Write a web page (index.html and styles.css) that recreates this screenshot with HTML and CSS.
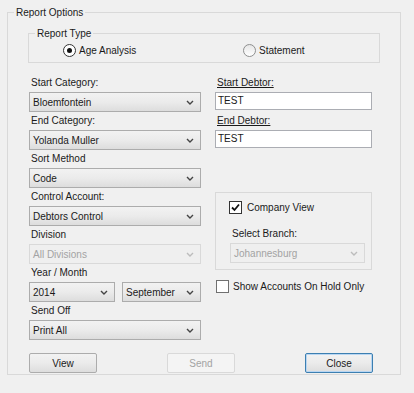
FILE: index.html
```html
<!DOCTYPE html>
<html lang="en">
<head>
    <title>Report Options</title>
    <link rel="stylesheet" href="styles.css">
</head>
<body>
    <fieldset class="group outer">
        <legend>Report Options</legend>
        <div class="outer-body">

            <!-- Report Type -->
            <fieldset class="group report-type">
                <legend>Report Type</legend>
                <div class="radio-row">
                    <label class="radio-opt"><span class="radio checked"></span>Age Analysis</label>
                    <label class="radio-opt"><span class="radio"></span>Statement</label>
                </div>
            </fieldset>

            <div class="columns">
                <div class="col-left">
                    <div class="field-label">Start Category:</div>
                    <div class="combo">Bloemfontein<svg class="chev" viewBox="0 0 8 5"><polyline points="1,1 4,4 7,1"/></svg></div>
                    <div class="field-label">End Category:</div>
                    <div class="combo">Yolanda Muller<svg class="chev" viewBox="0 0 8 5"><polyline points="1,1 4,4 7,1"/></svg></div>
                    <div class="field-label">Sort Method</div>
                    <div class="combo">Code<svg class="chev" viewBox="0 0 8 5"><polyline points="1,1 4,4 7,1"/></svg></div>
                    <div class="field-label">Control Account:</div>
                    <div class="combo">Debtors Control<svg class="chev" viewBox="0 0 8 5"><polyline points="1,1 4,4 7,1"/></svg></div>
                    <div class="field-label">Division</div>
                    <div class="combo disabled">All Divisions<svg class="chev" viewBox="0 0 8 5"><polyline points="1,1 4,4 7,1"/></svg></div>
                    <div class="field-label">Year / Month</div>
                    <div class="combo-pair">
                        <div class="combo year">2014<svg class="chev" viewBox="0 0 8 5"><polyline points="1,1 4,4 7,1"/></svg></div>
                        <div class="combo month">September<svg class="chev" viewBox="0 0 8 5"><polyline points="1,1 4,4 7,1"/></svg></div>
                    </div>
                    <div class="field-label">Send Off</div>
                    <div class="combo">Print All<svg class="chev" viewBox="0 0 8 5"><polyline points="1,1 4,4 7,1"/></svg></div>
                </div>

                <div class="col-right">
                    <div class="field-label"><u>Start Debtor:</u></div>
                    <div class="textbox">TEST</div>
                    <div class="field-label"><u>End Debtor:</u></div>
                    <div class="textbox">TEST</div>

                    <div class="group company">
                        <label class="check-row">
                            <span class="check checked"><svg viewBox="0 0 11 11"><polyline points="2,5.5 4.5,8 9,2.5"/></svg></span>Company View
                        </label>
                        <div class="field-label branch-label">Select Branch:</div>
                        <div class="combo disabled">Johannesburg<svg class="chev" viewBox="0 0 8 5"><polyline points="1,1 4,4 7,1"/></svg></div>
                    </div>

                    <label class="check-row hold">
                        <span class="check"></span>Show Accounts On Hold Only
                    </label>
                </div>
            </div>

            <div class="buttons">
                <button class="btn">View</button>
                <button class="btn" disabled>Send</button>
                <button class="btn focused">Close</button>
            </div>
        </div>
    </fieldset>
</body>
</html>
```

FILE: styles.css
```css
body {
    margin: 0;
    padding: 6px 0 0 7px;
    background: #f0f0f0;
    font-family: "Liberation Sans", Arial, sans-serif;
    font-size: 10px;
    color: #1a1a1a;
}
.group {
    margin: 0;
    padding: 0;
    border: 1px solid #d9d9d9;
    box-sizing: border-box;
}
.group legend {
    margin-left: 6px;
    padding: 0 2px;
    line-height: 13px;
}
.outer {
    width: 394px;
    height: 369px;
}
.outer-body {
    padding: 8px 0 0 20px;
}
.report-type {
    width: 352px;
}
.radio-row {
    display: flex;
    align-items: center;
    margin: 4px 0 5px 34px;
    height: 13px;
}
.radio-opt {
    display: flex;
    align-items: center;
    gap: 3px;
}
.radio-opt:first-child {
    width: 180px;
}
.radio {
    width: 11px;
    height: 11px;
    border: 1px solid #8e8f8f;
    border-radius: 50%;
    background: linear-gradient(#e6e6e6, #ffffff);
    position: relative;
}
.radio.checked {
    border-color: #333;
    background: #fff;
}
.radio.checked::after {
    content: "";
    position: absolute;
    left: 3px;
    top: 3px;
    width: 5px;
    height: 5px;
    border-radius: 50%;
    background: #111;
}
.columns {
    display: flex;
    gap: 14px;
    margin: 13px 0 0 1px;
}
.col-left {
    width: 172px;
}
.col-right {
    width: 157px;
}
.field-label {
    height: 14px;
    line-height: 14px;
    margin-bottom: 2px;
    padding-left: 2px;
}
.combo {
    height: 20px;
    box-sizing: border-box;
    border: 1px solid #acacac;
    background: linear-gradient(#f2f2f2, #ebebeb 50%, #dddddd);
    display: flex;
    align-items: center;
    justify-content: space-between;
    padding: 0 6px 0 3px;
    margin-bottom: 2px;
}
.chev {
    width: 8px;
    height: 5px;
    fill: none;
    stroke: #444;
    stroke-width: 1.4;
}
.combo.disabled {
    border-color: #d9d9d9;
    background: #efefef;
    color: #a3a3a3;
}
.combo.disabled .chev {
    stroke: #bcbcbc;
}
.combo-pair {
    display: flex;
    gap: 7px;
}
.combo.year {
    width: 86px;
}
.combo.month {
    width: 79px;
}
.textbox {
    height: 18px;
    line-height: 16px;
    box-sizing: border-box;
    border: 1px solid #abadb3;
    background: #fff;
    padding-left: 2px;
    margin-bottom: 4px;
}
.company {
    margin-top: 44px;
    height: 78px;
    padding: 8px 6px 0 14px;
}
.check-row {
    display: flex;
    align-items: center;
    gap: 5px;
    height: 13px;
}
.company .check-row {
    margin-left: -1px;
}
.check {
    width: 11px;
    height: 11px;
    border: 1px solid #707070;
    background: #fff;
    display: flex;
    align-items: center;
    justify-content: center;
}
.check.checked {
    border-color: #333;
}
.check svg {
    width: 11px;
    height: 11px;
    fill: none;
    stroke: #111;
    stroke-width: 1.8;
}
.branch-label {
    margin-top: 13px;
}
.hold {
    margin: 10px 0 0 1px;
    gap: 4px;
}
.buttons {
    display: flex;
    justify-content: space-between;
    width: 344px;
    margin: 11px 0 0 1px;
}
.btn {
    width: 68px;
    height: 20px;
    border: 1px solid #acacac;
    border-radius: 2px;
    background: linear-gradient(#f2f2f2, #ebebeb 50%, #dddddd);
    font-family: "Liberation Sans", Arial, sans-serif;
    font-size: 10px;
    color: #1a1a1a;
    padding: 0;
}
.btn:disabled {
    border-color: #d9d9d9;
    background: #f4f4f4;
    color: #a3a3a3;
}
.btn.focused {
    border-color: #3c7fb1;
    box-shadow: inset 0 0 0 1px #b9d6f2;
}
```
